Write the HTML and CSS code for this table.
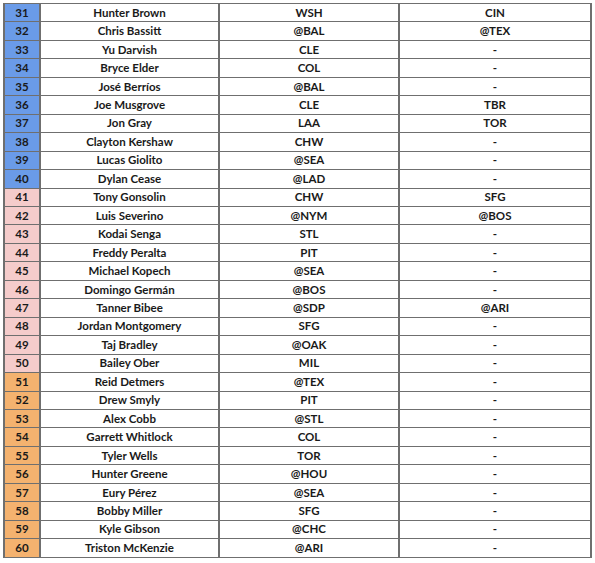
FILE: index.html
```html
<!DOCTYPE html>
<html>
<head>
<meta charset="utf-8">
<link rel="stylesheet" href="styles.css">
</head>
<body>
<table class="sched">
<colgroup><col class="c-rank"><col class="c-name"><col class="c-team"><col class="c-opp"></colgroup>
<tbody>
<tr><td class="rank blue">31</td><td>Hunter Brown</td><td>WSH</td><td>CIN</td></tr>
<tr><td class="rank blue">32</td><td>Chris Bassitt</td><td>@BAL</td><td>@TEX</td></tr>
<tr><td class="rank blue">33</td><td>Yu Darvish</td><td>CLE</td><td>-</td></tr>
<tr><td class="rank blue">34</td><td>Bryce Elder</td><td>COL</td><td>-</td></tr>
<tr><td class="rank blue">35</td><td>José Berríos</td><td>@BAL</td><td>-</td></tr>
<tr><td class="rank blue">36</td><td>Joe Musgrove</td><td>CLE</td><td>TBR</td></tr>
<tr><td class="rank blue">37</td><td>Jon Gray</td><td>LAA</td><td>TOR</td></tr>
<tr><td class="rank blue">38</td><td>Clayton Kershaw</td><td>CHW</td><td>-</td></tr>
<tr><td class="rank blue">39</td><td>Lucas Giolito</td><td>@SEA</td><td>-</td></tr>
<tr><td class="rank blue">40</td><td>Dylan Cease</td><td>@LAD</td><td>-</td></tr>
<tr><td class="rank pink">41</td><td>Tony Gonsolin</td><td>CHW</td><td>SFG</td></tr>
<tr><td class="rank pink">42</td><td>Luis Severino</td><td>@NYM</td><td>@BOS</td></tr>
<tr><td class="rank pink">43</td><td>Kodai Senga</td><td>STL</td><td>-</td></tr>
<tr><td class="rank pink">44</td><td>Freddy Peralta</td><td>PIT</td><td>-</td></tr>
<tr><td class="rank pink">45</td><td>Michael Kopech</td><td>@SEA</td><td>-</td></tr>
<tr><td class="rank pink">46</td><td>Domingo Germán</td><td>@BOS</td><td>-</td></tr>
<tr><td class="rank pink">47</td><td>Tanner Bibee</td><td>@SDP</td><td>@ARI</td></tr>
<tr><td class="rank pink">48</td><td>Jordan Montgomery</td><td>SFG</td><td>-</td></tr>
<tr><td class="rank pink">49</td><td>Taj Bradley</td><td>@OAK</td><td>-</td></tr>
<tr><td class="rank pink">50</td><td>Bailey Ober</td><td>MIL</td><td>-</td></tr>
<tr><td class="rank orange">51</td><td>Reid Detmers</td><td>@TEX</td><td>-</td></tr>
<tr><td class="rank orange">52</td><td>Drew Smyly</td><td>PIT</td><td>-</td></tr>
<tr><td class="rank orange">53</td><td>Alex Cobb</td><td>@STL</td><td>-</td></tr>
<tr><td class="rank orange">54</td><td>Garrett Whitlock</td><td>COL</td><td>-</td></tr>
<tr><td class="rank orange">55</td><td>Tyler Wells</td><td>TOR</td><td>-</td></tr>
<tr><td class="rank orange">56</td><td>Hunter Greene</td><td>@HOU</td><td>-</td></tr>
<tr><td class="rank orange">57</td><td>Eury Pérez</td><td>@SEA</td><td>-</td></tr>
<tr><td class="rank orange">58</td><td>Bobby Miller</td><td>SFG</td><td>-</td></tr>
<tr><td class="rank orange">59</td><td>Kyle Gibson</td><td>@CHC</td><td>-</td></tr>
<tr><td class="rank orange">60</td><td>Triston McKenzie</td><td>@ARI</td><td>-</td></tr>
</tbody>
</table>
</body>
</html>
```
FILE: styles.css
```css
html, body {
  margin: 0;
  padding: 0;
  background: #ffffff;
}
body {
  padding: 3px 0 0 3px;
}
.sched {
  border-collapse: collapse;
  table-layout: fixed;
  width: 587px;
  height: 555px;
  font-family: Lato, "Liberation Sans", sans-serif;
  font-weight: bold;
  font-size: 11.5px;
  color: #1a1a1a;
}
.c-rank { width: 36px; }
.c-name { width: 179px; }
.c-team { width: 180px; }
.c-opp { width: 192px; }
.sched td {
  border: 1px solid #6f6f6f;
  border-left-width: 2px;
  border-right-width: 2px;
  text-align: center;
  padding: 0;
  line-height: 14px;
  white-space: nowrap;
}
.rank.blue { background: #6a9be8; }
.rank.pink { background: #f5cccb; }
.rank.orange { background: #f4b26f; }
```
